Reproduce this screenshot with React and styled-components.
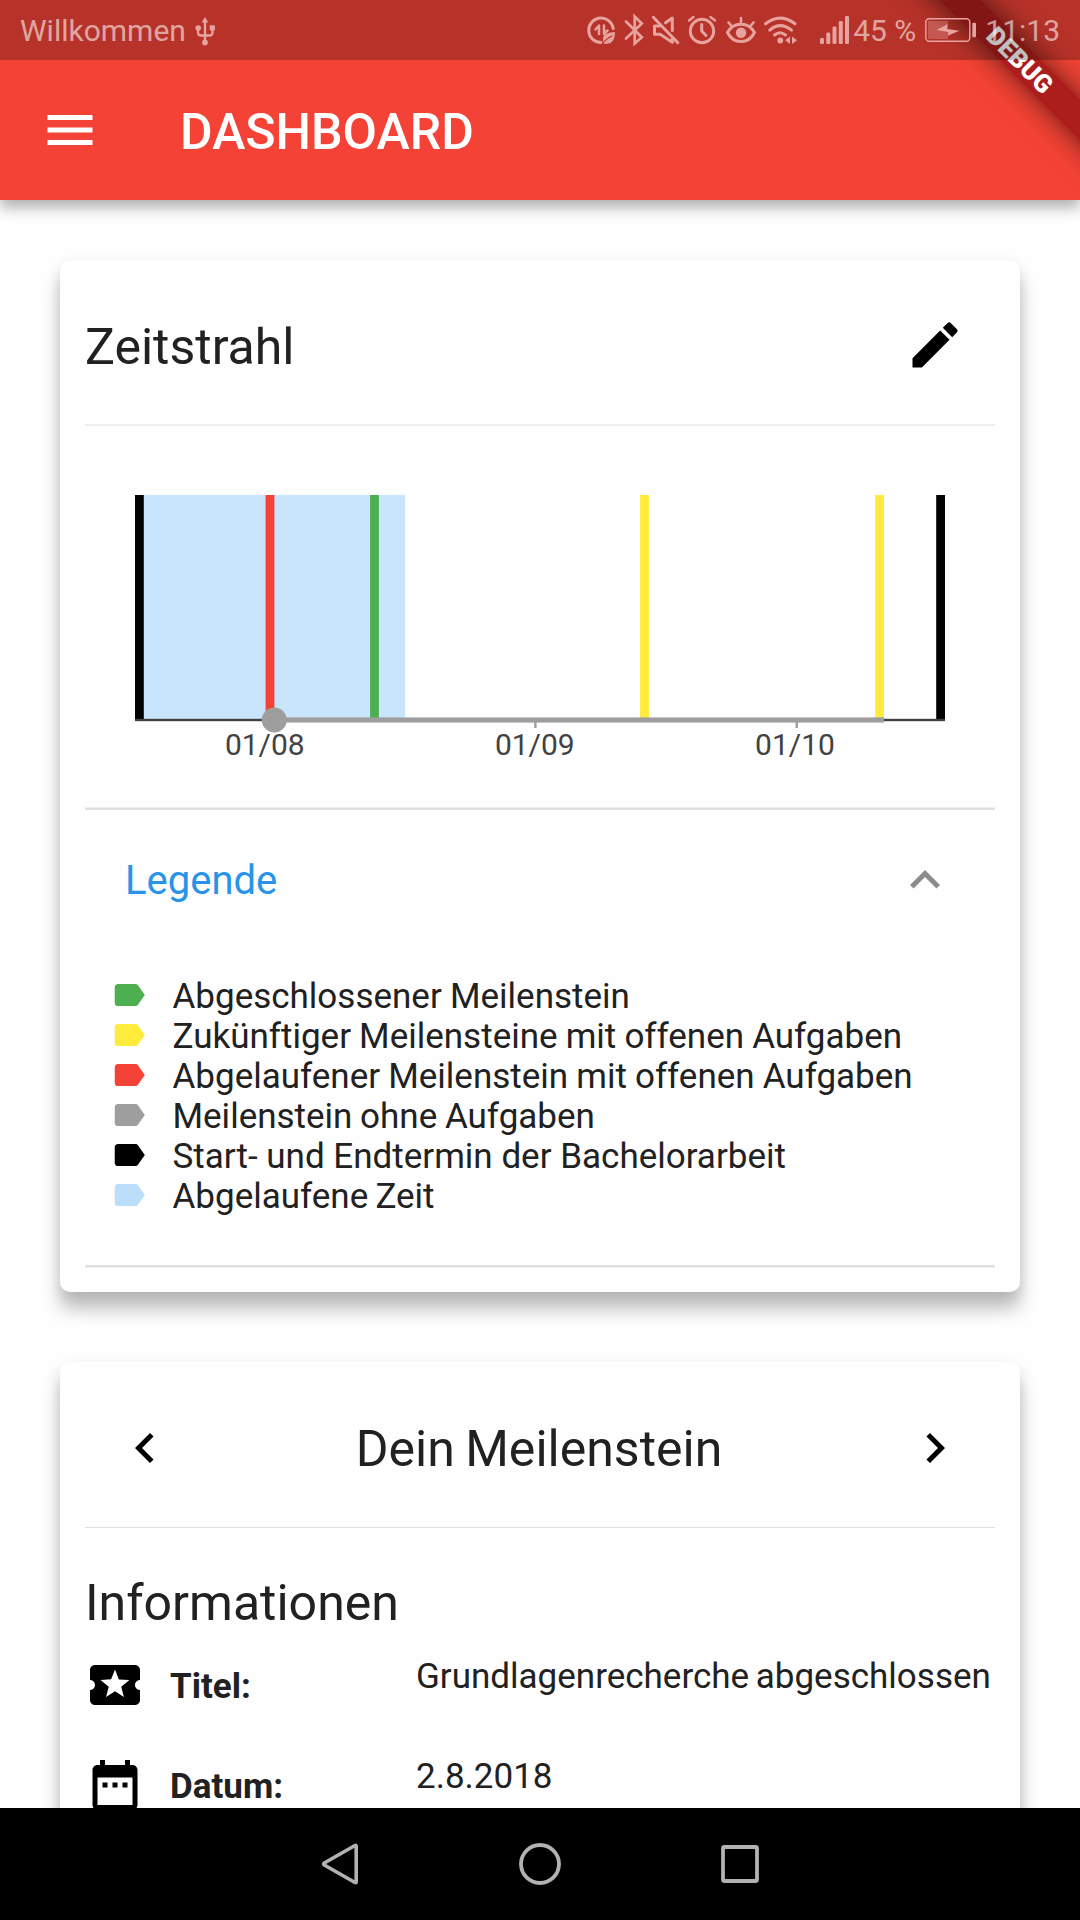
import React from "react";
import styled, { createGlobalStyle } from "styled-components";

const GlobalStyle = createGlobalStyle`
  *, *::before, *::after { box-sizing: border-box; }
  body {
    margin: 0;
    background: #fefefe;
    font-family: Roboto, "Noto Sans", sans-serif;
    color: #212121;
  }
`;

const Screen = styled.div`
  width: 1080px;
  height: 1920px;
  display: flex;
  flex-direction: column;
  overflow: hidden;
  background: #fefefe;
`;

const Header = styled.header`
  position: relative;
  z-index: 1;
  flex: none;
  height: 200px;
  background: #f44336;
  box-shadow: 0 8px 13px rgba(0, 0, 0, 0.3);
`;

const StatusBar = styled.div`
  position: relative;
  z-index: 2;
  height: 60px;
  display: flex;
  align-items: center;
  padding: 0 20px;
  background: rgba(0, 0, 0, 0.25);
  color: rgba(255, 255, 255, 0.58);
  font-size: 30px;
  line-height: 36px;
  white-space: nowrap;
`;

const StatusGroup = styled.div`
  display: flex;
  align-items: center;
  height: 60px;
  margin-left: auto;
`;

const StatusText = styled.span`
  margin-left: ${(p) => p.$gap || 0}px;
  padding-top: 2px;
`;

const StatusGlyph = styled.svg`
  display: block;
  flex: none;
  width: ${(p) => p.$width}px;
  height: 60px;
  margin-left: ${(p) => p.$gap || 0}px;
  fill: none;
  stroke: #e6a39f;
  stroke-width: 3;
  stroke-linecap: round;
  stroke-linejoin: round;
`;

const Toolbar = styled.div`
  height: 140px;
  display: flex;
  align-items: center;
  padding-left: 40px;
  gap: 80px;
  color: #fff;
`;

const ToolbarTitle = styled.h1`
  margin: 0;
  padding-top: 3px;
  font-size: 50px;
  font-weight: 500;
  line-height: 58px;
`;

const BannerClip = styled.div`
  position: absolute;
  inset: 0;
  overflow: hidden;
  z-index: 1;
  pointer-events: none;
`;

const Banner = styled.div`
  position: absolute;
  top: 45px;
  right: -90px;
  width: 300px;
  height: 30px;
  transform: rotate(45deg);
  background: rgba(160, 24, 24, 0.86);
  box-shadow: 0 0 28px rgba(0, 0, 0, 0.6);
  color: #fff;
  font-size: 25.5px;
  font-weight: 900;
  line-height: 30px;
  text-align: center;
`;

const Content = styled.main`
  flex: 1;
  min-height: 0;
  overflow: hidden;
  display: flex;
  flex-direction: column;
  gap: 70px;
  padding: 60px 60px 0;
`;

const Card = styled.section`
  flex: none;
  padding: 0 25px 24px;
  border-radius: 10px;
  background: #fefefe;
  box-shadow: 0 17px 18px rgba(0, 0, 0, 0.25), 0 3px 14px rgba(0, 0, 0, 0.08);
`;

const CardHeader = styled.div`
  display: flex;
  align-items: center;
  justify-content: space-between;
  height: ${(p) => p.$height}px;
  padding: 6px ${(p) => p.$inset}px 0 ${(p) => p.$insetLeft || 0}px;
`;

const Heading = styled.h2`
  margin: 0;
  padding-top: ${(p) => p.$nudge || 0}px;
  padding-right: ${(p) => (p.$tight ? 2 : 0)}px;
  font-size: 50px;
  font-weight: 400;
  line-height: 60px;
  word-spacing: ${(p) => (p.$tight ? -2 : 0)}px;
`;

const Divider = styled.div`
  height: ${(p) => p.$size}px;
  background: ${(p) => p.$color || "#e0e0e0"};
  border: 0 solid #f0f0f0;
  border-width: ${(p) => p.$edge || "0"};
`;

const Icon = styled.svg`
  display: block;
  flex: none;
  width: ${(p) => p.$size || 60}px;
  height: ${(p) => p.$size || 60}px;
  fill: ${(p) => p.$color || "#000"};
`;

const Chart = styled.svg`
  display: block;
  width: 910px;
  height: 381px;
  font-size: 30px;
`;

const LegendHeader = styled.div`
  display: flex;
  align-items: center;
  justify-content: space-between;
  height: 140px;
  padding: 0 40px;
  color: #2794ea;
  font-size: 40px;
`;

const LegendList = styled.ul`
  margin: 0;
  padding: 25px 0 50px 25px;
  list-style: none;
`;

const LegendItem = styled.li`
  display: flex;
  align-items: center;
  gap: 24.5px;
  height: 40px;
  font-size: 35px;
  line-height: 36px;
  white-space: nowrap;
`;

const LegendLabel = styled.span`
  padding-top: 4px;
  word-spacing: ${(p) => p.$spacing}px;
`;

const InfoSection = styled.div`
  display: flex;
  flex-direction: column;
  gap: 2px;
  padding-top: 45px;
`;

const InfoRow = styled.div`
  display: grid;
  grid-template-columns: 85px 246px 1fr;
  align-items: center;
  height: 100px;
  font-size: 35px;
  line-height: 42px;
  white-space: nowrap;
`;

const InfoLabel = styled.span`
  padding-top: 4px;
  font-weight: 700;
`;

const InfoValue = styled.span`
  padding-bottom: 16px;
  word-spacing: -2px;
`;

const NavBar = styled.nav`
  position: relative;
  z-index: 1;
  flex: none;
  height: 112px;
  display: flex;
  align-items: center;
  justify-content: center;
  gap: 140px;
  background: #000;
`;

const NavGlyph = styled.svg`
  display: block;
  width: 60px;
  height: 60px;
  fill: none;
  stroke: #b2b2b2;
  stroke-width: 3.8;
  stroke-linejoin: round;
`;

const paths = {
  menu: "M3 18h18v-2H3v2zm0-5h18v-2H3v2zm0-7v2h18V6H3z",
  edit: "M3 17.25V21h3.75L17.81 9.94l-3.75-3.75L3 17.25zM20.71 7.04a.996.996 0 0 0 0-1.41l-2.34-2.34a.996.996 0 0 0-1.41 0l-1.83 1.83 3.75 3.75 1.83-1.83z",
  expandLess: "M12 8l-6 6 1.41 1.41L12 10.83l4.59 4.58L18 14z",
  label:
    "M17.63 5.84C17.27 5.33 16.67 5 16 5L5 5.01C3.9 5.01 3 5.9 3 7v10c0 1.1.9 1.99 2 1.99L16 19c.67 0 1.27-.33 1.63-.84L22 12l-4.37-6.16z",
  chevronLeft: "M15.41 7.41L14 6l-6 6 6 6 1.41-1.41L10.83 12z",
  chevronRight: "M10 6L8.59 7.41 13.17 12l-4.58 4.59L10 18l6-6z",
  localPlay:
    "M20 12c0-1.1.9-2 2-2V6c0-1.1-.9-2-2-2H4c-1.1 0-1.99.9-1.99 2v4c1.1 0 1.99.9 1.99 2s-.89 2-2 2v4c0 1.1.9 2 2 2h16c1.1 0 2-.9 2-2v-4c-1.1 0-2-.9-2-2zm-4.42 4.8L12 14.5l-3.58 2.3 1.08-4.12-3.29-2.69 4.24-.25L12 5.8l1.54 3.95 4.24.25-3.29 2.69 1.09 4.11z",
  dateRange:
    "M9 11H7v2h2v-2zm4 0h-2v2h2v-2zm4 0h-2v2h2v-2zm2-7h-1V2h-2v2H8V2H6v2H5c-1.11 0-1.99.9-1.99 2L3 20c0 1.1.89 2 2 2h14c1.1 0 2-.9 2-2V6c0-1.1-.9-2-2-2zm0 16H5V9h14v11z",
};

const MaterialIcon = ({ name, size, color }) => (
  <Icon viewBox="0 0 24 24" $size={size} $color={color}>
    <path d={paths[name]} />
  </Icon>
);

const legend = [
  { color: "#4caf50", spacing: -0.5, text: "Abgeschlossener Meilenstein" },
  { color: "#ffeb3b", spacing: -0.6, text: "Zukünftiger Meilensteine mit offenen Aufgaben" },
  { color: "#f44336", spacing: -0.6, text: "Abgelaufener Meilenstein mit offenen Aufgaben" },
  { color: "#9e9e9e", spacing: -1, text: "Meilenstein ohne Aufgaben" },
  { color: "#000000", spacing: 0, text: "Start- und Endtermin der Bachelorarbeit" },
  { color: "#bbdefb", spacing: -1.5, text: "Abgelaufene Zeit" },
];

const milestones = [
  { x: 50, color: "#000000" },
  { x: 180.6, color: "#f44336" },
  { x: 285.1, color: "#4caf50" },
  { x: 555.1, color: "#ffeb3b" },
  { x: 790.2, color: "#ffeb3b" },
  { x: 851.2, color: "#000000" },
];

const Timeline = () => (
  <Chart viewBox="0 0 910 381">
    <rect x="50" y="69" width="270" height="225" fill="#c9e5fb" />
    {milestones.map((m) => (
      <rect key={m.x} x={m.x} y="69" width="8.8" height="225" fill={m.color} />
    ))}
    <rect x="50" y="292.8" width="810" height="2.4" fill="#424242" />
    <rect x="189" y="291.4" width="610" height="5.2" fill="#9e9e9e" />
    <rect x="449.2" y="296" width="2.4" height="6" fill="#9e9e9e" />
    <rect x="710.5" y="296" width="2.4" height="6" fill="#9e9e9e" />
    <circle cx="189.3" cy="294" r="12.5" fill="#9e9e9e" />
    <g fill="#424242" textAnchor="middle">
      <text x="179.8" y="329">01/08</text>
      <text x="449.8" y="329">01/09</text>
      <text x="710" y="329">01/10</text>
    </g>
  </Chart>
);

const solid = { fill: "#e6a39f", stroke: "none" };

const StatusIcons = () => (
  <>
    <StatusGlyph $width={30} viewBox="586 0 30 60">
      <path d="M613.2 28.5A12.3 12.3 0 1 0 601 42.6" />
      <path d="M595.5 29.5L599 25.5V34M604 25.5V34L607.5 30.5" strokeWidth="2.5" />
      <path d="M615 32c-7 .5-12 2-12 7.5 0 2 .4 3 .4 4.5 1-.4 1-.4 2-.2 7 .6 9.6-4.8 9.6-11.8z" {...solid} />
      <path d="M602.5 44C605 40 608.5 37.5 612 36" stroke="#b73228" strokeWidth="1.1" />
    </StatusGlyph>
    <StatusGlyph $width={22} $gap={7} viewBox="623 0 22 60">
      <path d="M626 21.5L641.8 37.2L634.7 43.5V16.5L641.8 23.5L626 38.5" strokeWidth="2.7" strokeLinejoin="miter" />
    </StatusGlyph>
    <StatusGlyph $width={30} $gap={5} viewBox="650 0 30 60">
      <path d="M653.3 17.3L677.8 42.7" />
      <path d="M665.5 22.8L672.3 18V30.5M659.5 26H654.5V34.3H660L672.3 42.3V39" />
    </StatusGlyph>
    <StatusGlyph $width={30} $gap={7} viewBox="687 0 30 60">
      <circle cx="702" cy="31" r="11.7" />
      <path d="M689 20.5L693.5 17M710.5 17L715 20.5" strokeWidth="2.4" />
      <path d="M701.7 24.5V31L706 35.5" />
    </StatusGlyph>
    <StatusGlyph $width={32} $gap={8} viewBox="725 0 32 60">
      <path d="M727.5 32.5C733.5 21.5 748.5 21.5 754.5 32.5C748.5 44.5 733.5 44.5 727.5 32.5Z" />
      <circle cx="741" cy="32.8" r="5.2" {...solid} />
      <path d="M741 18V22.5M728.5 22.5L731.5 26M753.5 22.5L750.5 26" strokeWidth="2.6" />
    </StatusGlyph>
    <StatusGlyph $width={36} $gap={6} viewBox="763 0 36 60">
      <path d="M765.5 23.8Q780 12.5 795 23.8M769.8 30.2Q780 21 791.5 30.2M774.5 35Q780 30.5 785.5 35" />
      <circle cx="780.3" cy="40.5" r="2.9" {...solid} />
      <path d="M790 36.5V44L785.2 40.2ZM792 36.5V44L797 40.2Z" {...solid} />
    </StatusGlyph>
    <StatusGlyph $width={30} $gap={21} viewBox="820 0 30 60">
      {[38, 32.5, 26.5, 21, 16].map((top, i) => (
        <rect key={top} x={820 + i * 6.25} y={top} width="4" height={44 - top} rx="1.3" {...solid} />
      ))}
    </StatusGlyph>
  </>
);

const Battery = () => (
  <StatusGlyph $width={52} $gap={9} viewBox="925 0 52 60">
    <rect x="925.8" y="18.7" width="44" height="22.6" rx="3.5" strokeWidth="1.4" />
    <rect x="928" y="21" width="20" height="18" fill="#e6a39f" fillOpacity=".35" stroke="none" />
    <path d="M936.5 30L947.5 24.3L947 29L959.5 30.7L947.7 35.7L948.3 32Z" {...solid} />
    <rect x="972.3" y="22.7" width="3.7" height="14.6" rx="1.2" {...solid} />
  </StatusGlyph>
);

const UsbIcon = () => (
  <StatusGlyph $width={22} $gap={8} viewBox="193 0 22 60">
    <path d="M204 21V42M197 29V32.5Q197 35.5 200 35.5H208.5Q211.5 35.5 211.5 32.5V29" strokeWidth="2.3" />
    <path d="M204 17L207.3 22.5H200.7Z" {...solid} />
    <circle cx="197.2" cy="28" r="2.8" {...solid} />
    <rect x="208.7" y="25.2" width="5.3" height="5.3" rx="1" {...solid} />
    <circle cx="204" cy="42.5" r="2.9" {...solid} />
  </StatusGlyph>
);

export default function App() {
  return (
    <>
      <GlobalStyle />
      <Screen>
        <Header>
          <StatusBar>
            <StatusText>Willkommen</StatusText>
            <UsbIcon />
            <StatusGroup>
              <StatusIcons />
              <StatusText $gap={3}>45 %</StatusText>
              <Battery />
              <StatusText $gap={8}>11:13</StatusText>
            </StatusGroup>
          </StatusBar>
          <Toolbar>
            <MaterialIcon name="menu" color="#fff" />
            <ToolbarTitle>DASHBOARD</ToolbarTitle>
          </Toolbar>
          <BannerClip>
            <Banner>DEBUG</Banner>
          </BannerClip>
        </Header>

        <Content>
          <Card>
            <CardHeader $height={164} $inset={30}>
              <Heading $nudge={4}>Zeitstrahl</Heading>
              <MaterialIcon name="edit" />
            </CardHeader>
            <Divider $size={2} $color="#eeeeee" />
            <Timeline />
            <Divider $size={3} $edge="1px 0 0" />
            <LegendHeader>
              <span>Legende</span>
              <MaterialIcon name="expandLess" color="#8b8b8b" />
            </LegendHeader>
            <LegendList>
              {legend.map((item) => (
                <LegendItem key={item.text}>
                  <MaterialIcon name="label" size={38} color={item.color} />
                  <LegendLabel $spacing={item.spacing}>{item.text}</LegendLabel>
                </LegendItem>
              ))}
            </LegendList>
            <Divider $size={3} $edge="0 0 1px" />
          </Card>

          <Card>
            <CardHeader $height={165} $inset={30} $insetLeft={30}>
              <MaterialIcon name="chevronLeft" />
              <Heading $nudge={2} $tight>Dein Meilenstein</Heading>
              <MaterialIcon name="chevronRight" />
            </CardHeader>
            <Divider $size={1} />
            <InfoSection>
              <Heading>Informationen</Heading>
              <div>
                <InfoRow>
                  <MaterialIcon name="localPlay" />
                  <InfoLabel>Titel:</InfoLabel>
                  <InfoValue>Grundlagenrecherche abgeschlossen</InfoValue>
                </InfoRow>
                <InfoRow>
                  <MaterialIcon name="dateRange" />
                  <InfoLabel>Datum:</InfoLabel>
                  <InfoValue>2.8.2018</InfoValue>
                </InfoRow>
              </div>
            </InfoSection>
          </Card>
        </Content>

        <NavBar>
          <NavGlyph viewBox="0 0 60 60">
            <path d="M45 11.5Q46.2 10.9 46.2 12V48Q46.2 49.1 45 48.5L14.3 31Q12.8 30 14.3 29Z" strokeWidth="3.6" />
          </NavGlyph>
          <NavGlyph viewBox="0 0 60 60">
            <circle cx="30" cy="30" r="19" />
          </NavGlyph>
          <NavGlyph viewBox="0 0 60 60">
            <rect x="13" y="13" width="34" height="34" rx="1.5" />
          </NavGlyph>
        </NavBar>
      </Screen>
    </>
  );
}
